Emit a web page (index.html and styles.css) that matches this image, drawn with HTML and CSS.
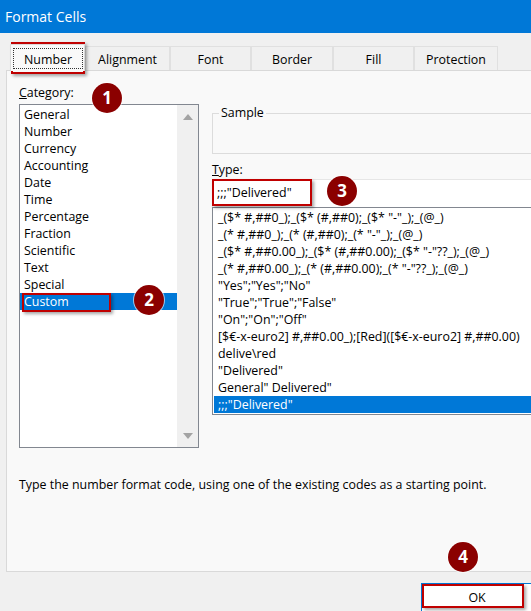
FILE: index.html
```html
<!DOCTYPE html>
<html>
<head>
<meta charset="utf-8">
<title>Format Cells</title>
<link rel="stylesheet" href="styles.css">
</head>
<body>
<div class="page">
  <div class="titlebar">Format Cells</div>
  <div class="tabs">
    <div class="tab active"><span class="focus">Number</span></div>
    <div class="tab t-align">Alignment</div>
    <div class="tab t-font">Font</div>
    <div class="tab t-border">Border</div>
    <div class="tab t-fill">Fill</div>
    <div class="tab t-prot">Protection</div>
  </div>
  <div class="panel">
    <div class="cols">
      <div class="left">
        <div class="label"><u>C</u>ategory:</div>
        <div class="catbox">
          <ul class="catlist">
            <li>General</li>
            <li>Number</li>
            <li>Currency</li>
            <li>Accounting</li>
            <li>Date</li>
            <li>Time</li>
            <li>Percentage</li>
            <li>Fraction</li>
            <li>Scientific</li>
            <li>Text</li>
            <li>Special</li>
            <li class="sel">Custom</li>
          </ul>
          <div class="scrollbar">
            <span class="arrow up"></span>
            <span class="arrow down"></span>
          </div>
        </div>
      </div>
      <div class="right">
        <fieldset class="sample"><legend>Sample</legend></fieldset>
        <div class="label type-label"><u>T</u>ype:</div>
        <div class="typeinput">;;;"Delivered"</div>
        <ul class="typelist">
          <li>_($* #,##0_);_($* (#,##0);_($* "-"_);_(@_)</li>
          <li>_(* #,##0_);_(* (#,##0);_(* "-"_);_(@_)</li>
          <li>_($* #,##0.00_);_($* (#,##0.00);_($* "-"??_);_(@_)</li>
          <li>_(* #,##0.00_);_(* (#,##0.00);_(* "-"??_);_(@_)</li>
          <li>"Yes";"Yes";"No"</li>
          <li>"True";"True";"False"</li>
          <li>"On";"On";"Off"</li>
          <li>[$€-x-euro2] #,##0.00_);[Red]([$€-x-euro2] #,##0.00)</li>
          <li>delive\red</li>
          <li>"Delivered"</li>
          <li>General" Delivered"</li>
          <li class="sel">;;;"Delivered"</li>
        </ul>
      </div>
    </div>
    <p class="desc">Type the number format code, using one of the existing codes as a starting point.</p>
  </div>
  <div class="footer">
    <button class="ok">OK</button>
  </div>

  <div class="redbox rb-tab"></div>
  <div class="redbox rb-custom"></div>
  <div class="redbox rb-type"></div>
  <div class="redbox rb-ok"></div>

  <div class="badge b1">1</div>
  <div class="badge b2">2</div>
  <div class="badge b3">3</div>
  <div class="badge b4">4</div>
</div>
</body>
</html>
```

FILE: styles.css
```css
html, body {
  margin: 0;
  padding: 0;
  background: #f0f0f0;
}
body {
  font-family: "Open Sans", "Noto Sans", "DejaVu Sans", sans-serif;
  font-size: 12.4px;
  color: #000;
  overflow: hidden;
}
.page {
  position: relative;
  width: 531px;
  height: 611px;
  overflow: hidden;
}
.titlebar {
  height: 33px;
  background: #0078d7;
  color: #fff;
  font-size: 14px;
  line-height: 33px;
  padding-left: 5px;
}
.tabs {
  display: flex;
  align-items: flex-end;
  height: 26px;
  margin-top: 11px;
  padding-left: 10px;
}
.tab {
  box-sizing: border-box;
  height: 24px;
  border: 1px solid #e0e0e0;
  border-bottom: none;
  background: #f0f0f0;
  text-align: center;
  line-height: 25px;
}
.tab.active {
  position: relative;
  z-index: 1;
  width: 75px;
  height: 27px;
  margin-bottom: -1px;
  background: #f9f9f9;
  border-color: #d9d9d9;
  padding: 3px 1px 2px 2px;
}
.tab.active .focus {
  display: block;
  height: 100%;
  box-sizing: border-box;
  border: 1px dotted #333;
  line-height: 21px;
}
.t-align { width: 85px; }
.t-font { width: 81px; }
.t-border { width: 82px; }
.t-fill { width: 81px; }
.t-prot { width: 84px; }

.panel {
  box-sizing: border-box;
  width: 560px;
  height: 502px;
  margin-left: 6px;
  border: 1px solid #d9d9d9;
  background: #f9f9f9;
  padding-left: 12px;
}
.cols {
  display: grid;
  grid-template-columns: 180px 1fr;
  column-gap: 13px;
  align-items: start;
}
.label {
  height: 16px;
  line-height: 16px;
}
.left {
  padding-top: 14px;
}
.catbox {
  box-sizing: border-box;
  margin-top: 3px;
  height: 344px;
  border: 1px solid #828790;
  background: #fff;
  display: flex;
}
.catlist {
  list-style: none;
  margin: 0;
  padding: 1px 0 0 0;
  flex: 1;
}
.catlist li, .typelist li {
  height: 17px;
  line-height: 18px;
  padding-left: 4px;
  white-space: nowrap;
}
li.sel {
  background: #0078d7;
  color: #fff;
}
.scrollbar {
  width: 21px;
  background: #f0f0f0;
  display: flex;
  flex-direction: column;
  justify-content: space-between;
  align-items: center;
  padding: 9px 0 8px;
}
.arrow {
  width: 0;
  height: 0;
  border-left: 5px solid transparent;
  border-right: 5px solid transparent;
}
.arrow.up { border-bottom: 6px solid #a3a3a3; }
.arrow.down { border-top: 6px solid #a3a3a3; }

.right {
  padding-top: 34px;
}
.sample {
  box-sizing: border-box;
  margin: 0;
  padding: 0;
  height: 49px;
  border: 1px solid #dcdcdc;
}
.sample legend {
  margin-left: 6px;
  padding: 0 2px;
  line-height: 16px;
}
.type-label {
  margin-top: 8px;
}
.typeinput {
  box-sizing: border-box;
  margin-top: 1px;
  height: 28px;
  border: 1px solid #e6e6e6;
  border-bottom: none;
  background: #fff;
  line-height: 26px;
  padding-left: 4px;
}
.typelist {
  box-sizing: border-box;
  list-style: none;
  margin: 0;
  padding: 1px 0 0 1px;
  height: 208px;
  border: 1px solid #828790;
  background: #fff;
  overflow: hidden;
}
.desc {
  margin: 29px 0 0 0;
  line-height: 16px;
}
.footer {
  padding-top: 11px;
  padding-left: 421px;
}
.ok {
  box-sizing: border-box;
  width: 112px;
  height: 30px;
  margin: 0;
  border: 1px solid #0078d7;
  background: #fff;
  font-family: inherit;
  font-size: 12.4px;
  color: #000;
  padding: 0;
  line-height: 28px;
}

.redbox {
  position: absolute;
  box-sizing: border-box;
  border: 2px solid #c00000;
  box-shadow: 2px 2px 3px rgba(0, 0, 0, 0.35);
}
.rb-tab { left: 11px; top: 42px; width: 74px; height: 32px; }
.rb-custom { left: 22px; top: 293px; width: 89px; height: 19px; }
.rb-type { left: 212px; top: 179px; width: 100px; height: 27px; }
.rb-ok { left: 422px; top: 584px; width: 102px; height: 24px; }

.badge {
  position: absolute;
  width: 30px;
  height: 30px;
  margin: -15px 0 0 -15px;
  border-radius: 50%;
  background: #8b0000;
  color: #fff;
  font-size: 17px;
  font-weight: 700;
  line-height: 30px;
  text-align: center;
  box-shadow: 0 0 0 1px rgba(255, 255, 255, 0.6);
}
.b1 { left: 107px; top: 98px; }
.b2 { left: 149px; top: 300px; }
.b3 { left: 342px; top: 191px; }
.b4 { left: 463px; top: 557px; }
```
